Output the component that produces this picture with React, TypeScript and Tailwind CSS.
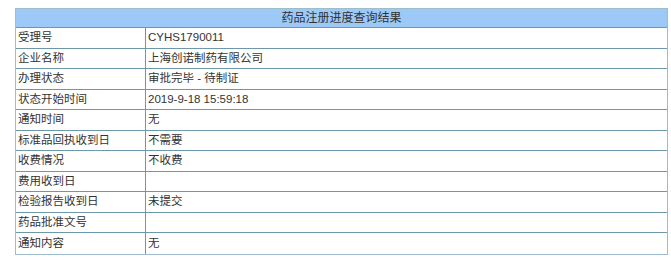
import React from 'react';

const rows: [string, string][] = [
  ['受理号', 'CYHS1790011'],
  ['企业名称', '上海创诺制药有限公司'],
  ['办理状态', '审批完毕 - 待制证'],
  ['状态开始时间', '2019-9-18 15:59:18'],
  ['通知时间', '无'],
  ['标准品回执收到日', '不需要'],
  ['收费情况', '不收费'],
  ['费用收到日', ''],
  ['检验报告收到日', '未提交'],
  ['药品批准文号', ''],
  ['通知内容', '无'],
];

const App: React.FC = () => {
  return (
    <div className="w-[671px] h-[260px] bg-white pt-[8px] pl-[15px] overflow-hidden">
      <div
        className="w-[653px] border border-[#9fbccb] text-[#333333] text-[11.5px] leading-none"
        style={{ fontFamily: '"Liberation Sans", "Noto Sans CJK SC", sans-serif' }}
      >
        <div className="h-[19px] bg-[#9dc9f6] border-b border-[#6f97aa] flex items-center justify-center text-[12px]">
          药品注册进度查询结果
        </div>
        {rows.map(([label, value], i) => (
          <div
            key={label}
            className={`flex h-[20.5px] ${i < rows.length - 1 ? 'border-b border-[#6f97aa]' : ''}`}
          >
            <div className="w-[130px] border-r border-[#6f97aa] flex items-center pl-[2px]">{label}</div>
            <div className="flex-1 flex items-center pl-[2px]">{value}</div>
          </div>
        ))}
      </div>
    </div>
  );
};

export default App;
